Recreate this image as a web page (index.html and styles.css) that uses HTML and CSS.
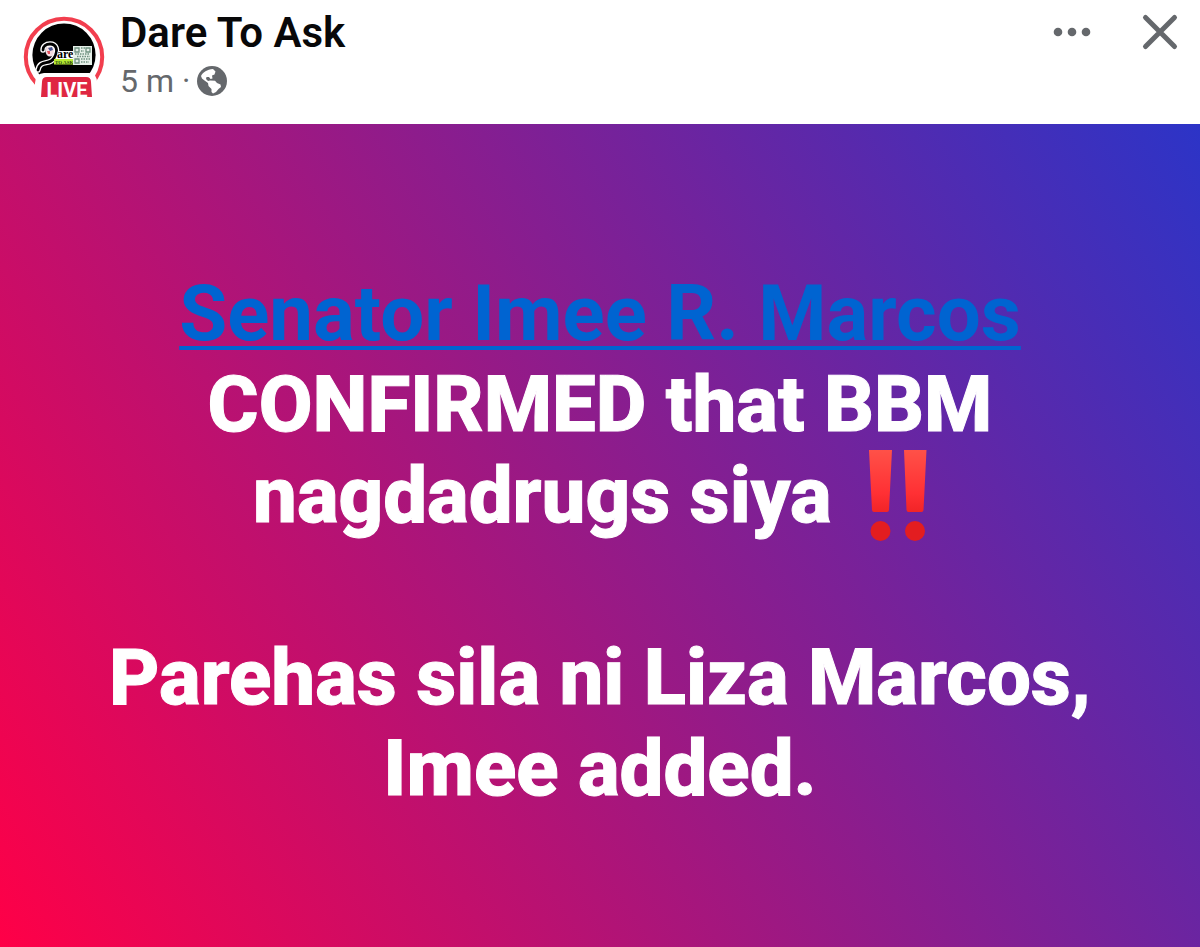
FILE: index.html
```html
<!DOCTYPE html>
<html lang="fil">
<head>
<meta charset="utf-8">
<meta name="viewport" content="width=device-width, initial-scale=1">
<title>Dare To Ask</title>
<link rel="stylesheet" href="styles.css">
</head>
<body>
<article class="post">
  <header class="post-header">
    <svg class="avatar" viewBox="0 0 84 84" role="img" aria-label="Dare To Ask, live">
      <circle cx="42" cy="42" r="38.2" fill="#fff" stroke="#f23e4e" stroke-width="4"/>
      <circle cx="42" cy="40" r="31.6" fill="#000"/>
      <path d="M33 36H51V44H33z" fill="#fff"/>
      <ellipse cx="28" cy="36" rx="4.500" ry="5.500" fill="#f3dce0"/>
      <path d="M16 55C18 44 28 51 32 43C37 35 34 29 28 29C24 29 21 31 21 35" fill="none" stroke="#fff" stroke-width="5.400" stroke-linecap="round"/>
      <path d="M16 55C18 44 28 51 32 43C37 35 34 29 28 29C24 29 21 31 21 35" fill="none" stroke="#000" stroke-width="2.800" stroke-linecap="round"/>
      <path d="M26 33l4-1 1 3-3 1z" fill="#46558f"/>
      <path d="M25 36l3 0 0 3-2 0z" fill="#e2525d"/>
      <text x="35" y="43" class="logo-name">are</text>
      <rect x="32" y="44" width="19" height="5.500" fill="#b8ec32"/>
      <text x="33" y="48.500" class="logo-tag">TO ASK</text>
      <rect x="51" y="31" width="19" height="19" fill="#e6f0e9"/>
      <g fill="none" stroke="#6f9180" stroke-width="1.300">
        <path d="M53 33h4v4h-4zM64 33h4v4h-4zM53 44h4v4h-4z"/>
        <path d="M59 33h4M59 36h3M53 39h15M55 41.500h13M59 44h9M59 47h8" stroke-dasharray="1.500 1"/>
      </g>
      <path d="M13 84V68Q14 58 22 58H67Q75 58 75 68V84z" fill="#fff"/>
      <path d="M19 82L20 67Q20 62 25 62H64Q69 62 69 67L70 82z" fill="#df2742"/>
      <text x="45" y="82" text-anchor="middle" class="live">LIVE</text>
    </svg>
    <div class="author">
      <h1 class="author-name">Dare To Ask</h1>
      <p class="meta"><span>5 m ·</span>
        <svg class="globe" viewBox="0 0 30 30" role="img" aria-label="Public">
          <circle cx="15" cy="15" r="15" fill="#65686c"/>
          <path d="M4 10C6 6 10 3.500 16 3L18.500 5.500L17.500 8.500L15 9.500L15.500 12.500L13.500 13L12 11L9.500 11L9 13L11 15L13 14.500L18 14.800L20 17L23.500 18.500L24 21L21.500 23L19 26L16 27.500L14.500 26L14.500 23L11.500 20L11 17L7.500 14.500L5 12.500z" fill="#fff"/>
        </svg>
      </p>
    </div>
    <div class="actions">
      <button class="icon-button" type="button" aria-label="More options">
        <svg class="more" viewBox="0 0 38 10"><g fill="#65686c"><circle cx="5" cy="5" r="4.300"/><circle cx="19" cy="5" r="4.300"/><circle cx="33" cy="5" r="4.300"/></g></svg>
      </button>
      <button class="icon-button" type="button" aria-label="Close">
        <svg class="close" viewBox="0 0 40 40"><path d="M5.500 5.500L34.500 34.500M34.500 5.500L5.500 34.500" stroke="#65686c" stroke-width="5" stroke-linecap="round"/></svg>
      </button>
    </div>
  </header>
  <div class="message">
    <p><a class="mention" href="#senator">Senator Imee R. Marcos</a><br>
      CONFIRMED that BBM<br>
      nagdadrugs siya
      <svg class="bangs" viewBox="0 0 60 92" role="img" aria-label="!!">
        <defs>
          <linearGradient id="bang" x1="0" y1="0" x2="0" y2="1"><stop offset="0" stop-color="#ff5148"/><stop offset=".7" stop-color="#ff3034"/><stop offset="1" stop-color="#f12427"/></linearGradient>
        </defs>
        <path d="M0 0H23L20 60Q19.800 62 18 62H5Q3.200 62 3 60zM35 0H57.500L54.500 60Q54.300 62 52.500 62H39.500Q37.700 62 37.500 60z" fill="url(#bang)"/>
        <circle cx="11.500" cy="81" r="10" fill="#e31d20"/><circle cx="46" cy="81" r="10" fill="#e31d20"/>
      </svg>
    </p>
    <p>Parehas sila ni Liza Marcos,<br>Imee added.</p>
  </div>
</article>
</body>
</html>
```
FILE: styles.css
```css
* {
  box-sizing: border-box;
}

body {
  margin: 0;
  background: #fff;
  font-family: Roboto, "Liberation Sans", sans-serif;
}

h1,
p {
  margin: 0;
}

.post {
  display: flex;
  flex-direction: column;
  min-height: 100vh;
}

.post-header {
  display: flex;
  align-items: flex-start;
  padding: 8px 20px 20px 22px;
  min-height: 124px;
}

.avatar {
  flex: none;
  width: 84px;
  height: 84px;
  margin-top: 7px;
  overflow: visible;
}

.logo-name {
  font: bold 12px "Liberation Serif", serif;
  fill: #000;
  stroke: #fff;
  stroke-width: 1px;
  paint-order: stroke;
}

.logo-tag {
  font: bold 5px "Liberation Serif", serif;
  fill: #1d4310;
}

.live {
  font: bold 20px Roboto, sans-serif;
  fill: #fff;
}

.author {
  flex: 1;
  margin-left: 14px;
}

.author-name {
  color: #080809;
  font-size: 42px;
  font-weight: 600;
  line-height: 50px;
}

.meta {
  display: flex;
  align-items: center;
  gap: 7px;
  color: #65686c;
  font-size: 32px;
  line-height: 46px;
}

.globe {
  width: 30px;
  height: 30px;
}

.actions {
  display: flex;
  align-items: center;
  gap: 49px;
  height: 48px;
}

.icon-button {
  display: flex;
  padding: 0;
  border: 0;
  background: none;
  cursor: pointer;
}

.more {
  width: 38px;
  height: 10px;
}

.close {
  width: 40px;
  height: 40px;
}

.message {
  display: flex;
  flex: 1;
  flex-direction: column;
  justify-content: center;
  gap: 90px;
  padding: 11px 80px 0;
  background: linear-gradient(58deg, #ff0047, #2c34c7);
  color: #fff;
  font-size: 78px;
  font-weight: 800;
  line-height: 91px;
  text-align: center;
  -webkit-text-stroke: 1px #fff;
}

.mention {
  color: #0064d1;
  font-weight: 700;
  text-decoration: underline;
  text-decoration-thickness: 4px;
  text-underline-offset: 6px;
  -webkit-text-stroke: 0;
}

.bangs {
  width: 60px;
  height: 92px;
  margin: 0 18px;
  vertical-align: top;
}
```
